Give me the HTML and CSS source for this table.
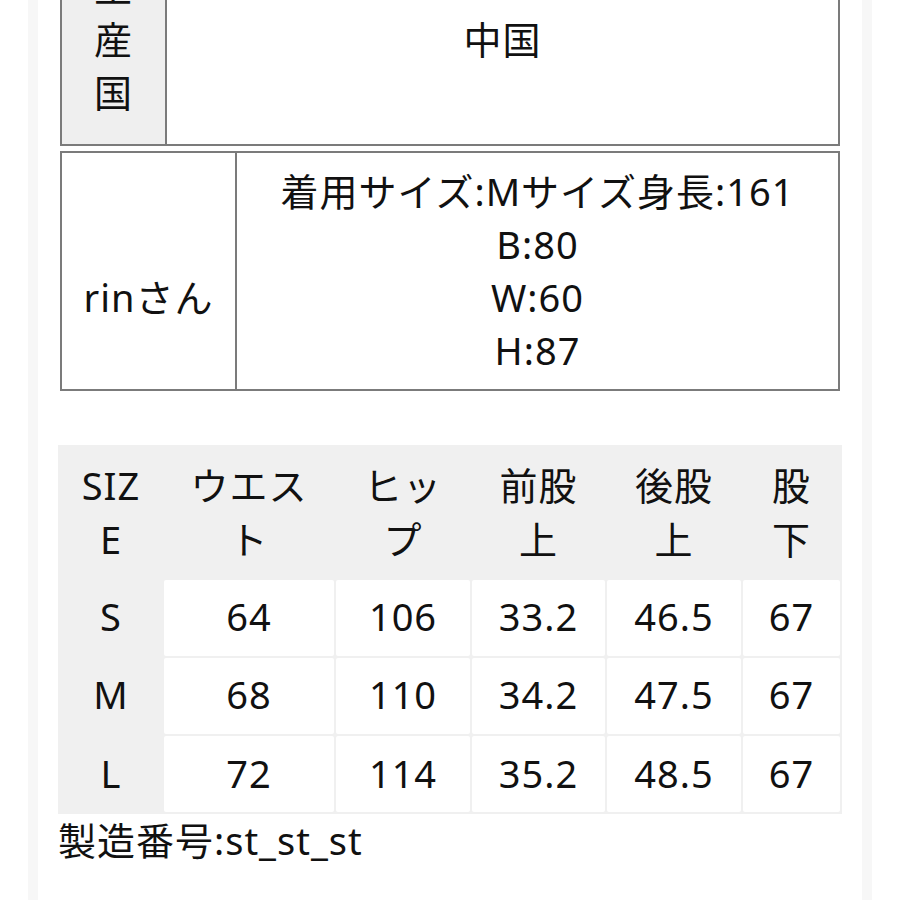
FILE: index.html
```html
<!DOCTYPE html>
<html lang="ja">
<head>
<meta charset="utf-8">
<title>商品詳細</title>
<link rel="stylesheet" href="styles.css">
</head>
<body>
<main class="page">
  <table class="spec spec-origin">
    <tr>
      <th class="spec-label spec-label-origin">生産国</th>
      <td class="spec-value">中国</td>
    </tr>
  </table>
  <table class="spec spec-model">
    <tr>
      <td class="spec-label spec-label-model">rinさん</td>
      <td class="spec-value">着用サイズ:Mサイズ身長:161<br>B:80<br>W:60<br>H:87</td>
    </tr>
  </table>
  <table class="sizes">
    <colgroup>
      <col class="c-size">
      <col class="c-waist">
      <col class="c-hip">
      <col class="c-front">
      <col class="c-back">
      <col class="c-inseam">
    </colgroup>
    <thead>
      <tr>
        <th>SIZE</th>
        <th>ウエスト</th>
        <th>ヒップ</th>
        <th>前股上</th>
        <th>後股上</th>
        <th>股下</th>
      </tr>
    </thead>
    <tbody>
      <tr><th>S</th><td>64</td><td>106</td><td>33.2</td><td>46.5</td><td>67</td></tr>
      <tr><th>M</th><td>68</td><td>110</td><td>34.2</td><td>47.5</td><td>67</td></tr>
      <tr><th>L</th><td>72</td><td>114</td><td>35.2</td><td>48.5</td><td>67</td></tr>
    </tbody>
  </table>
  <p class="serial">製造番号:st_st_st</p>
</main>
</body>
</html>
```

FILE: styles.css
```css
html, body {
  margin: 0;
  padding: 0;
  background: #ffffff;
}

body {
  font-family: "Noto Sans", "Noto Sans CJK JP", sans-serif;
  font-size: 38px;
  line-height: 1.4;
  letter-spacing: 1px;
  color: #111111;
}

.page {
  margin: -66px 28px 0;
  padding: 0 20px 40px;
  border-left: 10px solid #f7f7f7;
  border-right: 10px solid #f7f7f7;
  background: #ffffff;
}

/* bordered spec tables */
.spec {
  width: 780px;
  margin: 0 2px;
  table-layout: fixed;
  border-collapse: separate;
  border-spacing: 0;
  border: 2px solid #7b7b7b;
}

.spec-model {
  margin-top: 5px;
}

.spec th,
.spec td {
  box-sizing: border-box;
  font-weight: normal;
  text-align: center;
  vertical-align: middle;
}

.spec-label {
  border-right: 2px solid #7b7b7b;
}

.spec-label-origin {
  width: 105px;
  padding: 24px 16px;
  background: #efefef;
}

.spec-label-model {
  width: 175px;
  padding: 65px 16px 12px;
}

.spec-value {
  padding: 12px 16px;
}

/* size chart */
.sizes {
  width: 784px;
  margin-top: 54px;
  table-layout: fixed;
  border-collapse: separate;
  border-spacing: 2px;
  background: #f0f0f0;
}

.c-size { width: 102px; }
.c-waist { width: 170px; }
.c-hip { width: 134px; }
.c-front { width: 133px; }
.c-back { width: 134px; }
.c-inseam { width: 97px; }

.sizes th,
.sizes td {
  font-weight: normal;
  text-align: center;
  vertical-align: middle;
  word-break: break-all;
}

.sizes thead th {
  padding: 12px 16px;
}

.sizes tbody th,
.sizes tbody td {
  padding: 10.5px 16px 12.5px;
}

.sizes tbody td {
  background: #ffffff;
  border-radius: 2px;
}

.serial {
  margin: 0;
}
```
